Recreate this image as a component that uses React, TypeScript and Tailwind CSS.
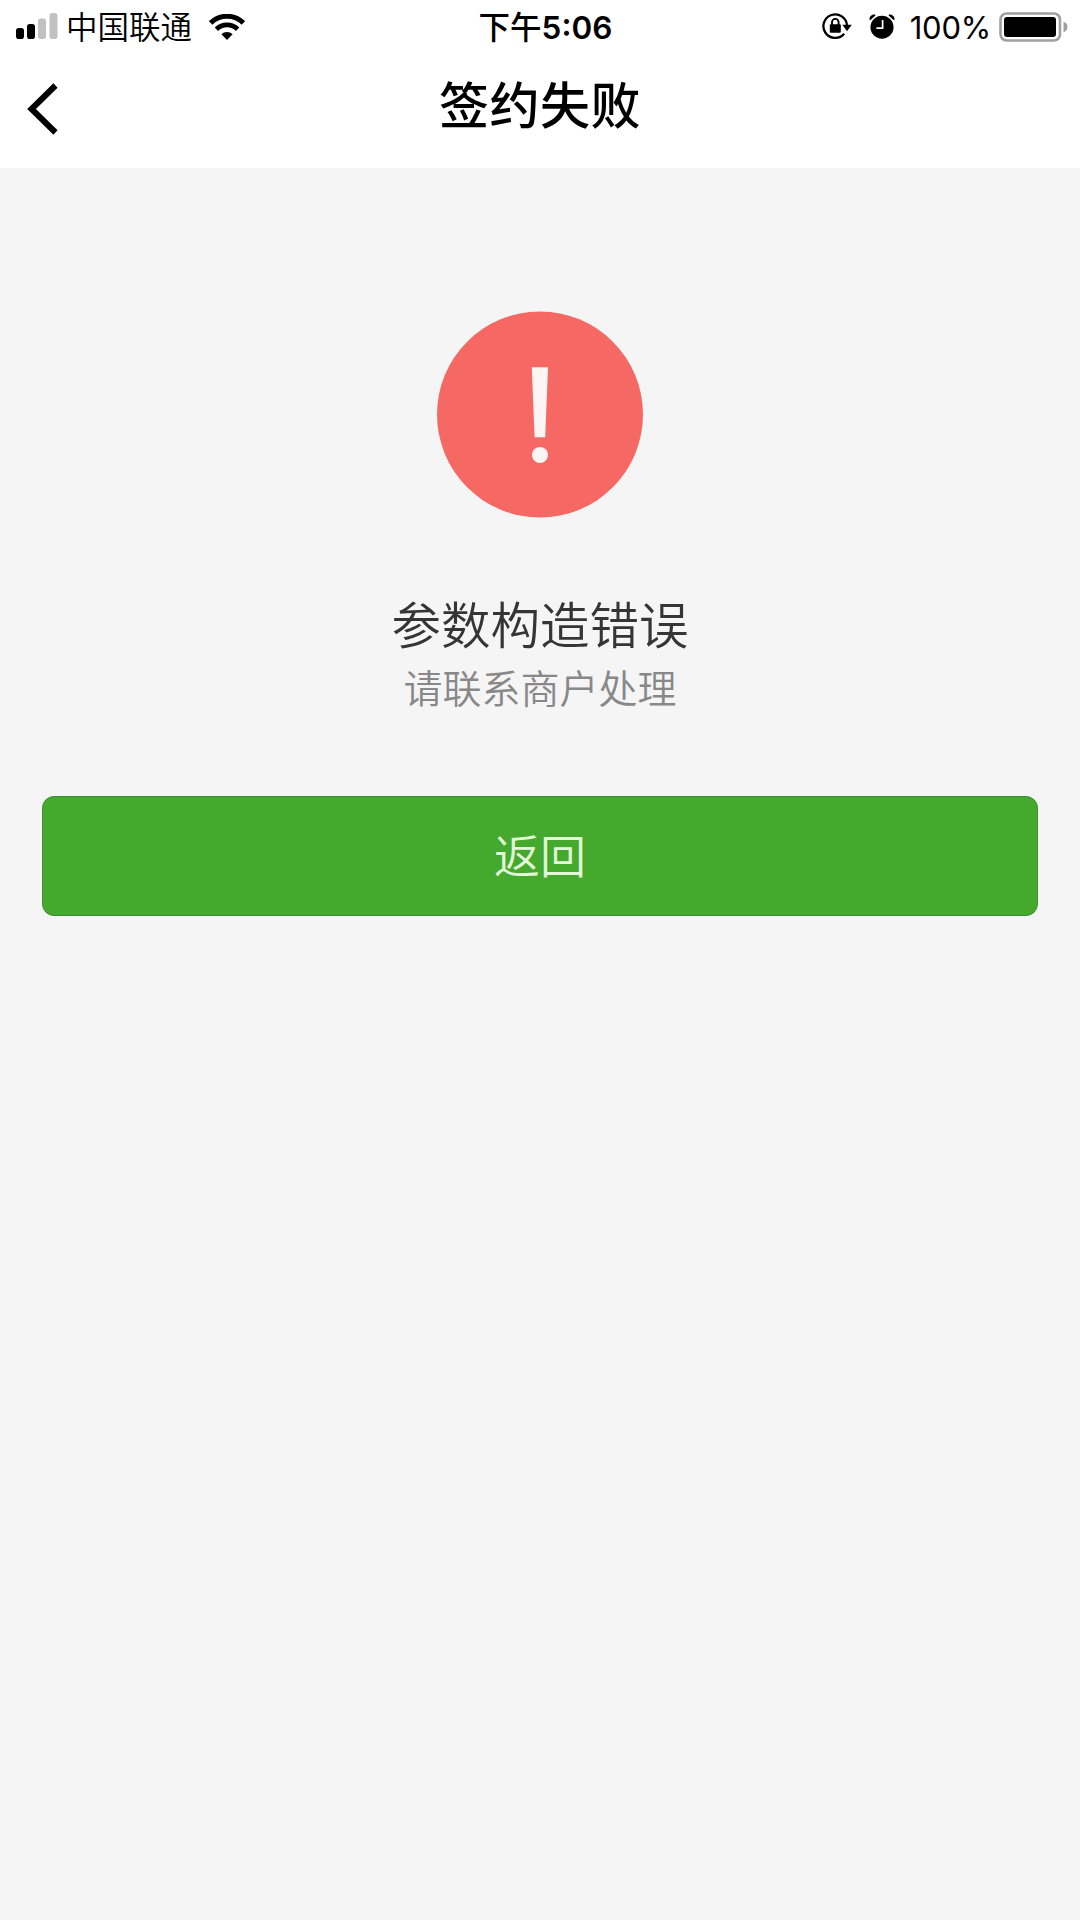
function SignalIcon() {
  return (
    <svg className="shrink-0" width="42" height="27" viewBox="0 0 42 27">
      <rect x="0" y="15" width="8" height="11" rx="2.8" fill="#000" />
      <rect x="11" y="11" width="8" height="15" rx="2.8" fill="#000" />
      <rect x="22" y="5.5" width="8" height="20.5" rx="2.8" fill="#c1c1c1" />
      <rect x="33.5" y="0" width="8" height="26" rx="2.8" fill="#c1c1c1" />
    </svg>
  );
}

function WifiIcon() {
  return (
    <svg className="shrink-0" width="36" height="26" viewBox="0 0 36 26">
      <path d="M1.6 9a23.4 23.4 0 0 1 32.8 0" fill="none" stroke="#000" strokeWidth="5" />
      <path d="M7.4 15.2a15 15 0 0 1 21.2 0" fill="none" stroke="#000" strokeWidth="4.8" />
      <path d="M12.4 20.2a8 8 0 0 1 11.2 0L18 26z" fill="#000" />
    </svg>
  );
}

function RotationLockIcon() {
  return (
    <svg className="shrink-0" width="30" height="27" viewBox="0 0 30 27">
      <path
        d="M22.2 20.8A11.8 11.8 0 1 1 25 12.5"
        fill="none"
        stroke="#000"
        strokeWidth="2.3"
      />
      <path d="M20.4 11.8h9.4L25 18.2z" fill="#000" />
      <rect x="7.8" y="11.2" width="11" height="8.6" rx="1" fill="#000" />
      <path d="M10 12V9.2a3.3 3.3 0 0 1 6.6 0V12" fill="none" stroke="#000" strokeWidth="1.9" />
    </svg>
  );
}

function AlarmIcon() {
  return (
    <svg className="shrink-0" width="26" height="25" viewBox="0 0 26 25">
      <circle cx="13" cy="13.2" r="11.5" fill="#000" />
      <path d="M1.2 5.2A4 4 0 0 1 5.6 1.2z" fill="#000" stroke="#000" strokeWidth="1.6" strokeLinejoin="round" />
      <path d="M24.8 5.2A4 4 0 0 0 20.4 1.2z" fill="#000" stroke="#000" strokeWidth="1.6" strokeLinejoin="round" />
      <path d="M13.6 6v8.2H7.4" fill="none" stroke="#fff" strokeWidth="1.7" />
    </svg>
  );
}

function BatteryIcon() {
  return (
    <svg className="shrink-0" width="69" height="30" viewBox="0 0 69 30">
      <rect x="1.5" y="1.5" width="59.5" height="27" rx="6" fill="none" stroke="#a0a0a0" strokeWidth="2.6" />
      <rect x="5" y="5" width="52" height="20" rx="3" fill="#000" />
      <path d="M64.5 9.8a5.4 5.4 0 0 1 0 10.4z" fill="#a0a0a0" />
    </svg>
  );
}

function StatusBar() {
  return (
    <div className="grid h-[53px] grid-cols-[1fr_auto_1fr] items-center pl-4 pr-3 text-[31.5px] leading-none text-black">
      <div className="flex items-center">
        <SignalIcon />
        <span className="ml-2 pt-[3px] font-[350]">中国联通</span>
        <span className="ml-[17px]">
          <WifiIcon />
        </span>
      </div>
      <div className="flex items-center pl-[7px] pt-[3px] font-medium">
        <span>下午</span>
        <span className="font-semibold">5:06</span>
      </div>
      <div className="flex items-center justify-end">
        <RotationLockIcon />
        <span className="ml-[17px]">
          <AlarmIcon />
        </span>
        <span className="ml-[15px] pt-px text-[31px] tracking-[-0.2px]">100%</span>
        <span className="ml-[8px]">
          <BatteryIcon />
        </span>
      </div>
    </div>
  );
}

function Header() {
  return (
    <div className="grid h-[115px] grid-cols-[1fr_auto_1fr] pt-[25px]">
      <button className="ml-[27px] mt-[5px] h-[52px] w-[31px]" aria-label="返回">
        <svg width="31" height="52" viewBox="0 0 31 52">
          <path d="M28.5 2.5 4.5 26l24 23.5" fill="none" stroke="#000" strokeWidth="6" />
        </svg>
      </button>
      <h1 className="mt-[2px] h-[52px] text-[50px] font-medium leading-[52px] tracking-[0.5px] text-black">签约失败</h1>
    </div>
  );
}

export default function App() {
  return (
    <div className="flex min-h-screen w-[1080px] flex-col bg-[#f5f5f5] font-['Inter','Noto_Sans_CJK_SC',sans-serif]">
      <div className="bg-white">
        <StatusBar />
        <Header />
      </div>

      <main className="flex flex-col items-center px-[42px] pt-[143px]">
        <svg width="206" height="207" viewBox="0 0 206 207">
          <circle cx="103" cy="103.5" r="103" fill="#f56864" />
          <path d="M94.8 56.3H111l-2.8 70H97.6z" fill="#fdf5f3" />
          <circle cx="103" cy="144" r="8" fill="#fdf5f3" />
        </svg>

        <h2 className="mt-[78px] text-[49.5px] font-[350] leading-[60px] text-[#353535]">参数构造错误</h2>
        <p className="mt-[3px] text-[39px] font-[350] leading-[60px] text-[#888888]">请联系商户处理</p>

        <button className="mt-[77px] h-[120px] w-full rounded-[12px] border border-[#3e8e35] bg-[#45a92e] text-[46px] font-[350] text-[#e2f8d8]">
          返回
        </button>
      </main>
    </div>
  );
}
